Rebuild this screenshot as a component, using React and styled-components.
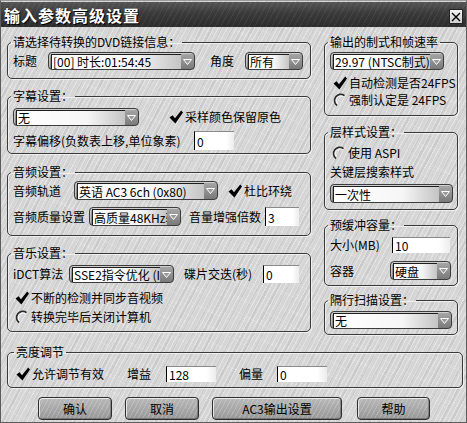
import React from 'react'
import styled, { createGlobalStyle } from 'styled-components'

const GlobalStyle = createGlobalStyle`
  html, body { margin: 0; padding: 0; background: #fff; }
  body {
    font-family: "Noto Sans CJK SC", "Noto Sans", sans-serif;
    font-size: 12px;
    color: #000;
  }
  * { box-sizing: border-box; }
`

const brushed = `
  repeating-linear-gradient(118deg, rgba(255,255,255,0.34) 0px, rgba(255,255,255,0.34) 1px, transparent 1px, transparent 4px),
  repeating-linear-gradient(118deg, rgba(0,0,0,0.05) 0px, rgba(0,0,0,0.05) 2px, transparent 2px, transparent 9px),
  repeating-linear-gradient(28deg, rgba(255,255,255,0.12) 0px, rgba(255,255,255,0.12) 1px, transparent 1px, transparent 13px)
`

const Window = styled.div`
  width: 467px;
  height: 423px;
  overflow: hidden;
  display: flex;
  flex-direction: column;
  border: 1px solid #5c5c5c;
  border-top-color: #9a9a9a;
  background-color: #d5d5d5;
  background-image: ${brushed};
`

const TitleBar = styled.div`
  margin-top: 1px;
  height: 25px;
  display: flex;
  align-items: center;
  justify-content: space-between;
  padding: 0 3px 0 3px;
  background-color: #3a3a3a;
  background-image:
    repeating-linear-gradient(118deg, rgba(255,255,255,0.06) 0px, rgba(255,255,255,0.06) 1px, transparent 1px, transparent 5px),
    linear-gradient(180deg, #555 0%, #3a3a3a 45%, #2c2c2c 100%);
`

const Title = styled.div`
  color: #fff;
  font-weight: 700;
  font-size: 16px;
  letter-spacing: 1px;
  line-height: 20px;
  text-shadow: 1px 1px 0 #000;
`

const CloseBtn = styled.div`
  width: 14px;
  height: 15px;
  margin-top: 4px;
  border: 1px solid #222;
  background: linear-gradient(180deg, #f2f2f2, #cfcfcf);
  display: flex;
  align-items: center;
  justify-content: center;
`

const Body = styled.div`
  padding: 8px 3px 0 6px;
  display: flex;
  flex-direction: column;
`

const Columns = styled.div`
  display: flex;
  gap: 13px;
  align-items: flex-start;
`

const Column = styled.div`
  width: ${p => p.$w}px;
  display: flex;
  flex-direction: column;
`

const Group = styled.fieldset`
  margin: ${p => p.$mt || 0}px 0 0 0;
  min-width: 0;
  border: 1px solid #3a3a3a;
  border-radius: 5px;
  padding: ${p => p.$pt}px ${p => p.$pr ?? 4}px ${p => p.$pb}px ${p => p.$pl ?? 5}px;
  box-shadow: inset 1px 1px 0 rgba(255,255,255,0.6), 1px 1px 0 rgba(255,255,255,0.6);

  legend {
    margin-left: -2px;
    padding: 0 2px;
    line-height: 14px;
    font-size: 12px;
    white-space: nowrap;
  }
`

const Row = styled.div`
  display: flex;
  align-items: center;
  height: ${p => p.$h || 18}px;
  margin-top: ${p => p.$mt || 0}px;
  white-space: nowrap;
`

const Label = styled.span`
  flex-shrink: 0;
  width: ${p => (p.$w ? `${p.$w}px` : 'auto')};
  margin-left: ${p => p.$ml || 0}px;
  line-height: 16px;
  white-space: nowrap;
`

const ComboBox = styled.div`
  flex-shrink: 0;
  width: ${p => p.$w}px;
  height: ${p => p.$h || 18}px;
  display: flex;
  padding: 1px 1px 0 2px;
  border: 1px solid #3c3c3c;
  border-radius: 4px;
  background: linear-gradient(180deg, #a8a8a8 0%, #7a7a7a 100%);
  box-shadow: inset 1px 1px 0 rgba(255,255,255,0.45);
`

const ComboField = styled.div`
  flex: 1;
  min-width: 0;
  overflow: hidden;
  white-space: nowrap;
  padding-left: 1px;
  line-height: 14px;
  font-size: 12px;
  border-top: 1px solid #1e1e1e;
  border-left: 1px solid #1e1e1e;
  background: linear-gradient(90deg, #ffffff 0%, #f6f6f6 65%, #c4c4c4 100%);
  display: flex;
  align-items: center;
`

const ComboArrow = styled.div`
  width: 12px;
  flex-shrink: 0;
  display: flex;
  align-items: center;
  justify-content: center;
`

const TextBox = styled.input`
  flex-shrink: 0;
  width: ${p => p.$w}px;
  height: ${p => p.$h || 18}px;
  margin: 0;
  padding: 0 0 0 2px;
  font-family: inherit;
  font-size: 12px;
  color: #000;
  border: none;
  border-left: 1px solid #000;
  border-top: 1px solid #8a8a8a;
  background: linear-gradient(90deg, #fff 0%, #fff 80%, #ececec 100%);
  outline: none;
`

const CheckItem = styled.div`
  display: flex;
  align-items: center;
  gap: 2px;
  margin-left: ${p => p.$ml || 0}px;
  height: 16px;
  line-height: 16px;
  white-space: nowrap;
`

const ButtonRow = styled.div`
  display: flex;
  margin-top: 9px;
  padding-left: 31px;
`

const Button = styled.div`
  width: ${p => p.$w}px;
  height: 23px;
  margin-left: ${p => p.$ml || 0}px;
  display: flex;
  align-items: center;
  justify-content: center;
  border: 1px solid #2e2e2e;
  border-radius: 4px;
  background-color: #a6a6a6;
  background-image:
    repeating-linear-gradient(118deg, rgba(255,255,255,0.18) 0px, rgba(255,255,255,0.18) 1px, transparent 1px, transparent 4px),
    linear-gradient(180deg, #b8b8b8, #989898);
  box-shadow: inset 1px 1px 0 rgba(255,255,255,0.7), inset -1px -1px 0 rgba(0,0,0,0.25);
  font-size: 12px;
`

function Arrow() {
  return (
    <svg width="9" height="6" viewBox="0 0 9 6">
      <polygon points="0.5,0.5 8.5,0.5 4.5,5.5" fill="#9a9a9a" stroke="#fff" strokeWidth="1" />
    </svg>
  )
}

function Combo({ w, h, children }) {
  return (
    <ComboBox $w={w} $h={h}>
      <ComboField>{children}</ComboField>
      <ComboArrow><Arrow /></ComboArrow>
    </ComboBox>
  )
}

function CheckMark() {
  return (
    <svg width="14" height="14" viewBox="0 0 14 14">
      <path d="M0.5 7.6 L3.6 5.2 L6 8.2 L12.2 0.6 L14 2.4 L6.4 13.4 Z" fill="#000" />
    </svg>
  )
}

function RadioMark() {
  return (
    <svg width="14" height="14" viewBox="0 0 14 14">
      <path d="M4 12.5 A6 6 0 0 1 11.5 2.6" fill="none" stroke="#2a2a2a" strokeWidth="1.6" />
      <path d="M5.2 11.4 A4.6 4.6 0 0 1 10.6 3.8" fill="none" stroke="#fff" strokeWidth="1" />
    </svg>
  )
}

function Check({ checked, ml, children }) {
  return (
    <CheckItem $ml={ml}>
      {checked ? <CheckMark /> : <RadioMark />}
      <span>{children}</span>
    </CheckItem>
  )
}

export default function App() {
  return (
    <>
      <GlobalStyle />
      <Window>
        <TitleBar>
          <Title>输入参数高级设置</Title>
          <CloseBtn>
            <svg width="10" height="10" viewBox="0 0 10 10">
              <path d="M1 1 L9 9 M9 1 L1 9" stroke="#000" strokeWidth="1.4" />
            </svg>
          </CloseBtn>
        </TitleBar>

        <Body>
          <Columns>
            <Column $w={304}>
              <Group $pt={3} $pb={8} $pl={5}>
                <legend>请选择待转换的DVD链接信息：</legend>
                <Row>
                  <Label $w={35}>标题</Label>
                  <Combo w={147}>[00] 时长:01:54:45</Combo>
                  <Label $w={35} $ml={15}>角度</Label>
                  <Combo w={58}>所有</Combo>
                </Row>
              </Group>

              <Group $mt={10} $pt={5} $pb={3} $pl={5}>
                <legend>字幕设置：</legend>
                <Row>
                  <Combo w={126}>无</Combo>
                  <Check checked ml={30}>采样颜色保留原色</Check>
                </Row>
                <Row $h={19} $mt={5}>
                  <Label $w={181}>字幕偏移(负数表上移,单位象素)</Label>
                  <TextBox $w={40} $h={19} defaultValue="0" />
                </Row>
              </Group>

              <Group $mt={11} $pt={2} $pb={9} $pl={5}>
                <legend>音频设置：</legend>
                <Row $h={19}>
                  <Label $w={61}>音频轨道</Label>
                  <Combo w={144} h={19}>英语 AC3 6ch (0x80)</Combo>
                  <Check checked ml={10}>杜比环绕</Check>
                </Row>
                <Row $h={19} $mt={7}>
                  <Label $w={76}>音频质量设置</Label>
                  <Combo w={92} h={19}>高质量48KHz转换</Combo>
                  <Label $w={76} $ml={8}>音量增强倍数</Label>
                  <TextBox $w={34} $h={19} defaultValue="3" />
                </Row>
              </Group>

              <Group $mt={10} $pt={5} $pb={6} $pl={5}>
                <legend>音乐设置：</legend>
                <Row>
                  <Label $w={56}>iDCT算法</Label>
                  <Combo w={105}>SSE2指令优化 (Intel)</Combo>
                  <Label $w={79} $ml={10}>碟片交迭(秒)</Label>
                  <TextBox $w={36} defaultValue="0" />
                </Row>
                <Row $h={16} $mt={7}>
                  <Check checked ml={2}>不断的检测并同步音视频</Check>
                </Row>
                <Row $h={16} $mt={3}>
                  <Check ml={2}>转换完毕后关闭计算机</Check>
                </Row>
              </Group>
            </Column>

            <Column $w={134}>
              <Group $pt={3} $pb={7} $pl={5}>
                <legend>输出的制式和帧速率</legend>
                <Row>
                  <Combo w={114}>29.97 (NTSC制式)</Combo>
                </Row>
                <Row $h={16} $mt={5}>
                  <Check checked ml={3}>自动检测是否24FPS</Check>
                </Row>
                <Row $h={16} $mt={1}>
                  <Check ml={3}>强制认定是 24FPS</Check>
                </Row>
              </Group>

              <Group $mt={9} $pt={6} $pb={6} $pl={5}>
                <legend>层样式设置：</legend>
                <Row $h={16}>
                  <Check ml={2}>使用 ASPI</Check>
                </Row>
                <Row $h={16} $mt={3}>
                  <Label>关键层搜索样式</Label>
                </Row>
                <Row $h={19} $mt={4}>
                  <Combo w={123} h={19}>一次性</Combo>
                </Row>
              </Group>

              <Group $mt={8} $pt={5} $pb={5} $pl={5}>
                <legend>预缓冲容量：</legend>
                <Row $h={16}>
                  <Label $w={62}>大小(MB)</Label>
                  <TextBox $w={58} $h={16} defaultValue="10" />
                </Row>
                <Row $h={19} $mt={8}>
                  <Label $w={60}>容器</Label>
                  <Combo w={61} h={19}>硬盘</Combo>
                </Row>
              </Group>

              <Group $mt={7} $pt={4} $pb={5} $pl={5}>
                <legend>隔行扫描设置：</legend>
                <Row>
                  <Combo w={122}>无</Combo>
                </Row>
              </Group>
            </Column>
          </Columns>

          <Group $mt={10} $pt={7} $pb={5} $pl={8}>
            <legend>亮度调节</legend>
            <Row $h={16}>
              <Check checked>允许调节有效</Check>
              <Label $w={39} $ml={23}>增益</Label>
              <TextBox $w={50} $h={16} defaultValue="128" />
              <Label $w={38} $ml={23}>偏量</Label>
              <TextBox $w={50} $h={16} defaultValue="0" />
            </Row>
          </Group>

          <ButtonRow>
            <Button $w={74}>确认</Button>
            <Button $w={74} $ml={13}>取消</Button>
            <Button $w={130} $ml={13}>AC3输出设置</Button>
            <Button $w={73} $ml={15}>帮助</Button>
          </ButtonRow>
        </Body>
      </Window>
    </>
  )
}
